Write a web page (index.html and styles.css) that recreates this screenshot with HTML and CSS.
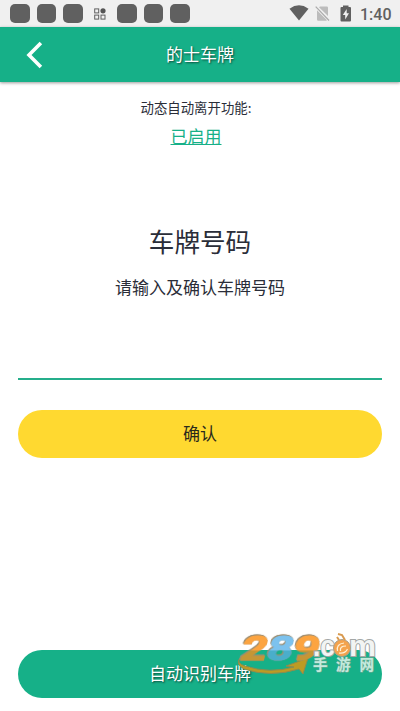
FILE: index.html
```html
<!DOCTYPE html>
<html lang="zh-CN">
<head>
<meta charset="utf-8">
<meta name="viewport" content="width=device-width, initial-scale=1">
<title>的士车牌</title>
<link rel="stylesheet" href="styles.css">
</head>
<body>
<div class="screen">
  <div class="status">
    <div class="notices">
      <i class="tile"></i><i class="tile"></i><i class="tile"></i>
      <svg class="apps" width="12" height="12" viewBox="0 0 12 12" fill="none" stroke="#606060" stroke-width="1">
        <rect x=".7" y=".9" width="4" height="4"/><rect x=".7" y="7.1" width="4" height="4"/><rect x="7" y="7.1" width="4" height="4"/><circle cx="9" cy="2.8" r="2.6" fill="#555" stroke="none"/>
      </svg>
      <i class="tile"></i><i class="tile"></i><i class="tile"></i>
    </div>
    <div class="system">
      <svg class="wifi" width="20" height="16" viewBox="0 0 20 16"><path d="M.5 3.7Q10-3 19.500 3.700L10 15.500Z" fill="#606060"/></svg>
      <svg class="sim" width="15" height="17" viewBox="0 0 15 17"><path d="M5 1.500H11.800Q13 1.500 13 2.700V11L4 2.200ZM2 5.200L12 15.300Q11.600 15.700 11 15.700H3.200Q2 15.700 2 14.500Z" fill="#bcbcbc"/><path d="M.7 1.700L14 15.500" stroke="#aaa" stroke-width="1.200"/></svg>
      <svg class="battery" width="12" height="17" viewBox="0 0 12 17"><path d="M3 .5H8.500V2H10Q11 2 11 3V15.500Q11 16.500 10 16.500H1.500Q.5 16.500 .5 15.500V3Q.5 2 1.500 2H3Z" fill="#606060"/><path d="M6.700 4L2.800 10H5.200V14.500L9 8.300H6.700Z" fill="#f0f0f0"/></svg>
      <span class="clock">1:40</span>
    </div>
  </div>
  <header class="bar">
    <svg class="back" width="18" height="28" viewBox="0 0 18 28" fill="none" stroke="#fff" stroke-width="3.600"><path d="M14.900 2L3 14L14.900 26"/></svg>
    <h1>的士车牌</h1>
  </header>
  <main>
    <p class="label">动态自动离开功能:</p>
    <a class="state">已启用</a>
    <h2>车牌号码</h2>
    <p class="hint">请输入及确认车牌号码</p>
    <div class="field"></div>
    <button class="btn confirm">确认</button>
    <button class="btn detect">自动识别车牌</button>
  </main>
  <svg class="mark" width="156" height="66" viewBox="0 -14 156 66">
    <defs>
      <linearGradient id="orange" gradientUnits="userSpaceOnUse" x1="0" x2="0" y1="3" y2="29"><stop offset=".58" stop-color="#fca440"/><stop offset=".59" stop-color="#c59635"/></linearGradient>
      <linearGradient id="blue" gradientUnits="userSpaceOnUse" x1="0" x2="0" y1="3" y2="29"><stop offset=".58" stop-color="#7cc2ee"/><stop offset=".59" stop-color="#4aaecb"/></linearGradient>
    </defs>
    <path d="M4 26Q0 31 9 34Q34 42 58 35L50 34L72 26L67 42L63 37Q34 46 8 37Q-1 32 4 26Z" fill="#bd9b23" stroke="#8b8c50" stroke-width="1"/>
    <g class="digits" transform="skewX(-14)">
      <text x="10" y="28" textLength="26" lengthAdjust="spacingAndGlyphs" fill="url(#orange)" stroke="url(#orange)">2</text>
      <text x="36" y="28" textLength="26" lengthAdjust="spacingAndGlyphs" fill="url(#blue)" stroke="url(#blue)">8</text>
      <text x="62" y="28" textLength="26" lengthAdjust="spacingAndGlyphs" fill="url(#orange)" stroke="url(#orange)">9</text>
    </g>
    <g class="domain">
      <text x="77" y="24" textLength="22" lengthAdjust="spacingAndGlyphs">.c</text>
      <text x="113" y="24" textLength="27" lengthAdjust="spacingAndGlyphs">m</text>
    </g>
    <circle cx="106" cy="16" r="8.500" fill="#f4a34d" stroke="#aaa08d"/>
    <path d="M103 8L101 5M109 8L106 3L102 2" fill="none" stroke="#d99a4f" stroke-width="2"/>
    <path d="M101.500 19Q100 12 108 11M104.500 19Q103.500 14 110 14M103 21Q109 22 111.500 17" fill="none" stroke="#fff0d5" stroke-width="1.200"/>
    <g class="site"><text x="77" y="37.500">手</text><text x="100" y="37.500">游</text><text x="123.500" y="37.500">网</text></g>
  </svg>
</div>
</body>
</html>
```
FILE: styles.css
```css
* { box-sizing: border-box; }
body { margin: 0; }
h1, h2, p { margin: 0; font-weight: 400; }
.screen {
  position: relative;
  display: flex;
  flex-direction: column;
  width: 400px;
  height: 711px;
  overflow: hidden;
  background: #fff;
  color: #2a2d38;
  font-family: "Noto Sans CJK SC", sans-serif;
}
.status {
  flex: none;
  display: flex;
  justify-content: space-between;
  height: 27px;
  padding: 0 9px 0 10px;
  background: #f0f0f0;
}
.notices, .system { display: flex; align-items: center; }
.notices { gap: 7px; }
.tile { width: 19.700px; height: 19.500px; border-radius: 5px; background: #606060; }
.apps { margin: 0 4px 0 4px; }
.wifi { margin-top: -1px; }
.sim { margin-left: 6px; }
.battery { margin-left: 10px; margin-top: -1px; }
.clock {
  width: 31px;
  margin-left: 8px;
  color: #606060;
  font: 500 16px/27px Roboto, sans-serif;
  padding-top: 1px;
  white-space: nowrap;
}
.bar {
  flex: none;
  display: grid;
  grid-template-columns: 60px 1fr 60px;
  align-items: center;
  height: 55px;
  background: #16b088;
  box-shadow: 0 1px 3px rgba(0, 0, 0, .4);
}
.back { margin-left: 26px; }
.bar h1 {
  padding-bottom: 3px;
  font-size: 17px;
  line-height: 25px;
  text-align: center;
  color: #fff;
  text-shadow: 1px 1px 2px rgba(0, 0, 0, .6);
}
main {
  flex: 1;
  display: flex;
  flex-direction: column;
  align-items: center;
  padding: 15px 18px 12.600px;
}
.label { margin-left: -8px; font-size: 13.400px; line-height: 20px; }
.state {
  margin: 6px 8px 0 0;
  font-size: 17px;
  line-height: 25px;
  color: #16b088;
  text-decoration: underline;
  text-decoration-thickness: 1px;
  text-underline-offset: 1px;
}
h2 { margin-top: 74px; font-size: 25.600px; line-height: 37px; }
.hint { margin-top: 15px; font-size: 17px; line-height: 25px; }
.field { width: 100%; height: 81px; border-bottom: 2px solid #25ae8b; }
.btn {
  width: 100%;
  height: 48px;
  padding: 0 0 3px;
  border: 0;
  border-radius: 24px;
  font: 17px/25px "Noto Sans CJK SC", sans-serif;
}
.confirm { margin-top: 30.400px; background: #ffd930; color: #2a2a1c; }
.detect {
  margin-top: auto;
  background: #16b088;
  color: #fff;
  text-shadow: 1px 1px 2px rgba(0, 0, 0, .6);
}
.mark { position: absolute; left: 236px; top: 618px; }
.digits {
  font: 700 34px Roboto, sans-serif;
  stroke-width: 1.200px;
  filter: drop-shadow(.7px .7px 0 #9d8e72) drop-shadow(-.7px -.7px 0 #9d8e72);
}
.domain {
  font: 900 29px "Liberation Sans", sans-serif;
  fill: #f2f4f3;
  stroke: #a3a7a6;
  stroke-width: 2px;
  paint-order: stroke;
}
.site {
  font: 700 14.500px "Noto Sans CJK SC", sans-serif;
  fill: #c3ebdd;
  stroke: #78a897;
  stroke-width: 1px;
  paint-order: stroke;
}
```
